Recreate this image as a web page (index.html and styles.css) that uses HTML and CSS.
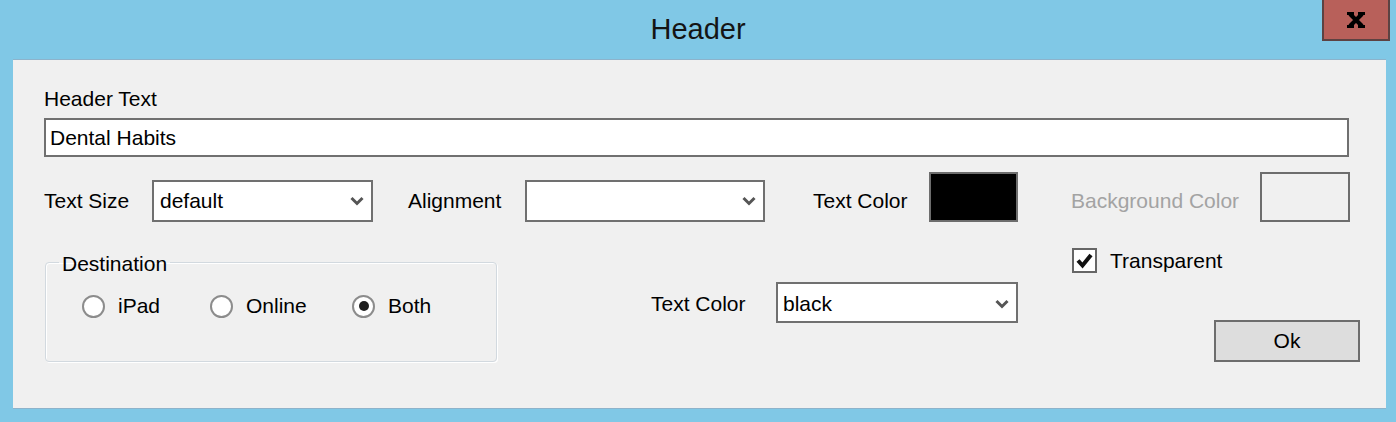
FILE: index.html
```html
<!DOCTYPE html>
<html>
<head>
    <title>Header</title>
    <link rel="stylesheet" href="styles.css">
</head>
<body>
    <div class="titlebar">
        <span></span>
        <div class="title">Header</div>
        <div class="close-btn">
            <svg width="18" height="16" viewBox="0 0 18 16">
                <path d="M3 2 L15 14 M15 2 L3 14" stroke="#000" stroke-width="4.2" fill="none"/>
                <rect x="0" y="0" width="7" height="3" fill="#000"/>
                <rect x="11" y="0" width="7" height="3" fill="#000"/>
                <rect x="0" y="13" width="7" height="3" fill="#000"/>
                <rect x="11" y="13" width="7" height="3" fill="#000"/>
            </svg>
        </div>
    </div>

    <div class="panel">
        <div class="field-label">Header Text</div>
        <div class="text-input">Dental Habits</div>

        <div class="row-options">
            <span class="lbl lbl-size">Text Size</span>
            <div class="combo combo-size">
                <span>default</span>
                <svg class="chevron" width="14" height="10" viewBox="0 0 14 10"><polyline points="1.5,2 7,7.5 12.5,2"/></svg>
            </div>
            <span class="lbl lbl-align">Alignment</span>
            <div class="combo combo-align">
                <span></span>
                <svg class="chevron" width="14" height="10" viewBox="0 0 14 10"><polyline points="1.5,2 7,7.5 12.5,2"/></svg>
            </div>
            <span class="lbl lbl-color">Text Color</span>
            <div class="swatch swatch-black"></div>
            <span class="lbl lbl-bg">Background Color</span>
            <div class="swatch swatch-empty"></div>
        </div>

        <div class="row-lower">
            <fieldset class="group">
                <legend>Destination</legend>
                <div class="radios">
                    <div class="radio radio-ipad"><span class="dot"></span>iPad</div>
                    <div class="radio radio-online"><span class="dot"></span>Online</div>
                    <div class="radio"><span class="dot checked"></span>Both</div>
                </div>
            </fieldset>

            <div class="color-pick">
                <span class="lbl lbl-color2">Text Color</span>
                <div class="combo combo-color">
                    <span>black</span>
                    <svg class="chevron" width="14" height="10" viewBox="0 0 14 10"><polyline points="1.5,2 7,7.5 12.5,2"/></svg>
                </div>
            </div>

            <div class="side">
                <div class="check-row">
                    <span class="checkbox">
                        <svg width="21" height="21" viewBox="0 0 21 21"><polyline points="4,10.5 8.5,15.5 17,5"/></svg>
                    </span>
                    Transparent
                </div>
                <div class="ok-btn">Ok</div>
            </div>
        </div>
    </div>
</body>
</html>
```

FILE: styles.css
```css
body {
    margin: 0;
    width: 1396px;
    height: 422px;
    overflow: hidden;
    background-color: #80c8e6;
    font-family: "Liberation Sans", Arial, sans-serif;
    font-size: 21px;
    line-height: 24px;
    color: #000;
}

.titlebar {
    display: grid;
    grid-template-columns: 1fr auto 1fr;
    height: 59px;
}

.title {
    font-size: 29px;
    line-height: 59px;
    color: #141414;
}

.close-btn {
    justify-self: end;
    align-self: start;
    margin-right: 6px;
    width: 68px;
    height: 41px;
    box-sizing: border-box;
    border: 2px solid #5d4242;
    border-top: 0;
    background-color: #b8605a;
    display: flex;
    align-items: center;
    justify-content: center;
}

.panel {
    margin-left: 13px;
    width: 1373px;
    height: 350px;
    box-sizing: border-box;
    border-top: 1px solid #8db3cb;
    border-bottom: 1px solid #8db3cb;
    background-color: #f0f0f0;
    padding: 27px 26px 0 31px;
}

.text-input {
    margin: 7px 11px 0 0;
    height: 39px;
    box-sizing: border-box;
    border: 2px solid #707070;
    background-color: #fff;
    padding: 0 4px;
    line-height: 35px;
}

.row-options {
    display: flex;
    align-items: flex-end;
    margin-top: 15px;
}

.lbl {
    flex-shrink: 0;
    margin-bottom: 9px;
}

.lbl-size { width: 108px; }
.lbl-align { width: 117px; margin-left: 35px; }
.lbl-color { width: 116px; margin-left: 48px; }
.lbl-bg { width: 189px; margin-left: 53px; color: #a3a3a3; }

.combo {
    flex-shrink: 0;
    display: flex;
    align-items: center;
    justify-content: space-between;
    height: 42px;
    box-sizing: border-box;
    border: 2px solid #707070;
    background-color: #fff;
    padding: 0 7px 0 6px;
}

.combo-size { width: 221px; }
.combo-align { width: 240px; }
.combo-color { width: 242px; height: 41px; padding-top: 3px; padding-left: 5px; }

.chevron polyline {
    fill: none;
    stroke: #555;
    stroke-width: 3;
}

.swatch {
    flex-shrink: 0;
    height: 50px;
    box-sizing: border-box;
    border: 2px solid #6d6d6d;
}

.swatch-black { width: 89px; background-color: #000; }
.swatch-empty { width: 90px; background-color: #f0f0f0; }

.row-lower {
    display: flex;
    align-items: flex-start;
}

.group {
    flex-shrink: 0;
    width: 452px;
    box-sizing: border-box;
    margin: 27px 0 0 1px;
    padding: 0;
    border: 1px solid #d2d9df;
    border-radius: 4px;
    box-shadow: inset 1px 1px 0 #fff, 1px 1px 0 #fff;
}

.group legend {
    margin-left: 13px;
    padding: 3px 3px 0;
}

.radios {
    display: flex;
    align-items: center;
    margin: 18px 0 43px;
    padding-left: 36px;
}

.radio {
    display: flex;
    align-items: center;
}

.radio-ipad { width: 128px; }
.radio-online { width: 142px; }

.dot {
    width: 23px;
    height: 23px;
    box-sizing: border-box;
    border: 2px solid #8c8c8c;
    border-radius: 50%;
    background-color: #fff;
    margin-right: 13px;
    display: flex;
    align-items: center;
    justify-content: center;
}

.dot.checked::after {
    content: "";
    width: 10px;
    height: 10px;
    border-radius: 50%;
    background-color: #1e1e1e;
}

.color-pick {
    flex-shrink: 0;
    display: flex;
    align-items: baseline;
    margin: 60px 0 0 154px;
}

.lbl-color2 {
    width: 125px;
    margin-bottom: 0;
}

.side {
    flex-shrink: 0;
    width: 288px;
    margin: 26px 0 0 54px;
    display: flex;
    flex-direction: column;
}

.check-row {
    display: flex;
    align-items: center;
}

.checkbox {
    width: 25px;
    height: 25px;
    box-sizing: border-box;
    border: 2px solid #666;
    background-color: #fff;
    margin-right: 13px;
    display: flex;
    align-items: center;
    justify-content: center;
}

.checkbox polyline {
    fill: none;
    stroke: #111;
    stroke-width: 4;
}

.ok-btn {
    align-self: flex-end;
    margin-top: 47px;
    width: 146px;
    height: 42px;
    box-sizing: border-box;
    border: 2px solid #6d6d6d;
    background-color: #ddd;
    text-align: center;
    line-height: 38px;
}
```
